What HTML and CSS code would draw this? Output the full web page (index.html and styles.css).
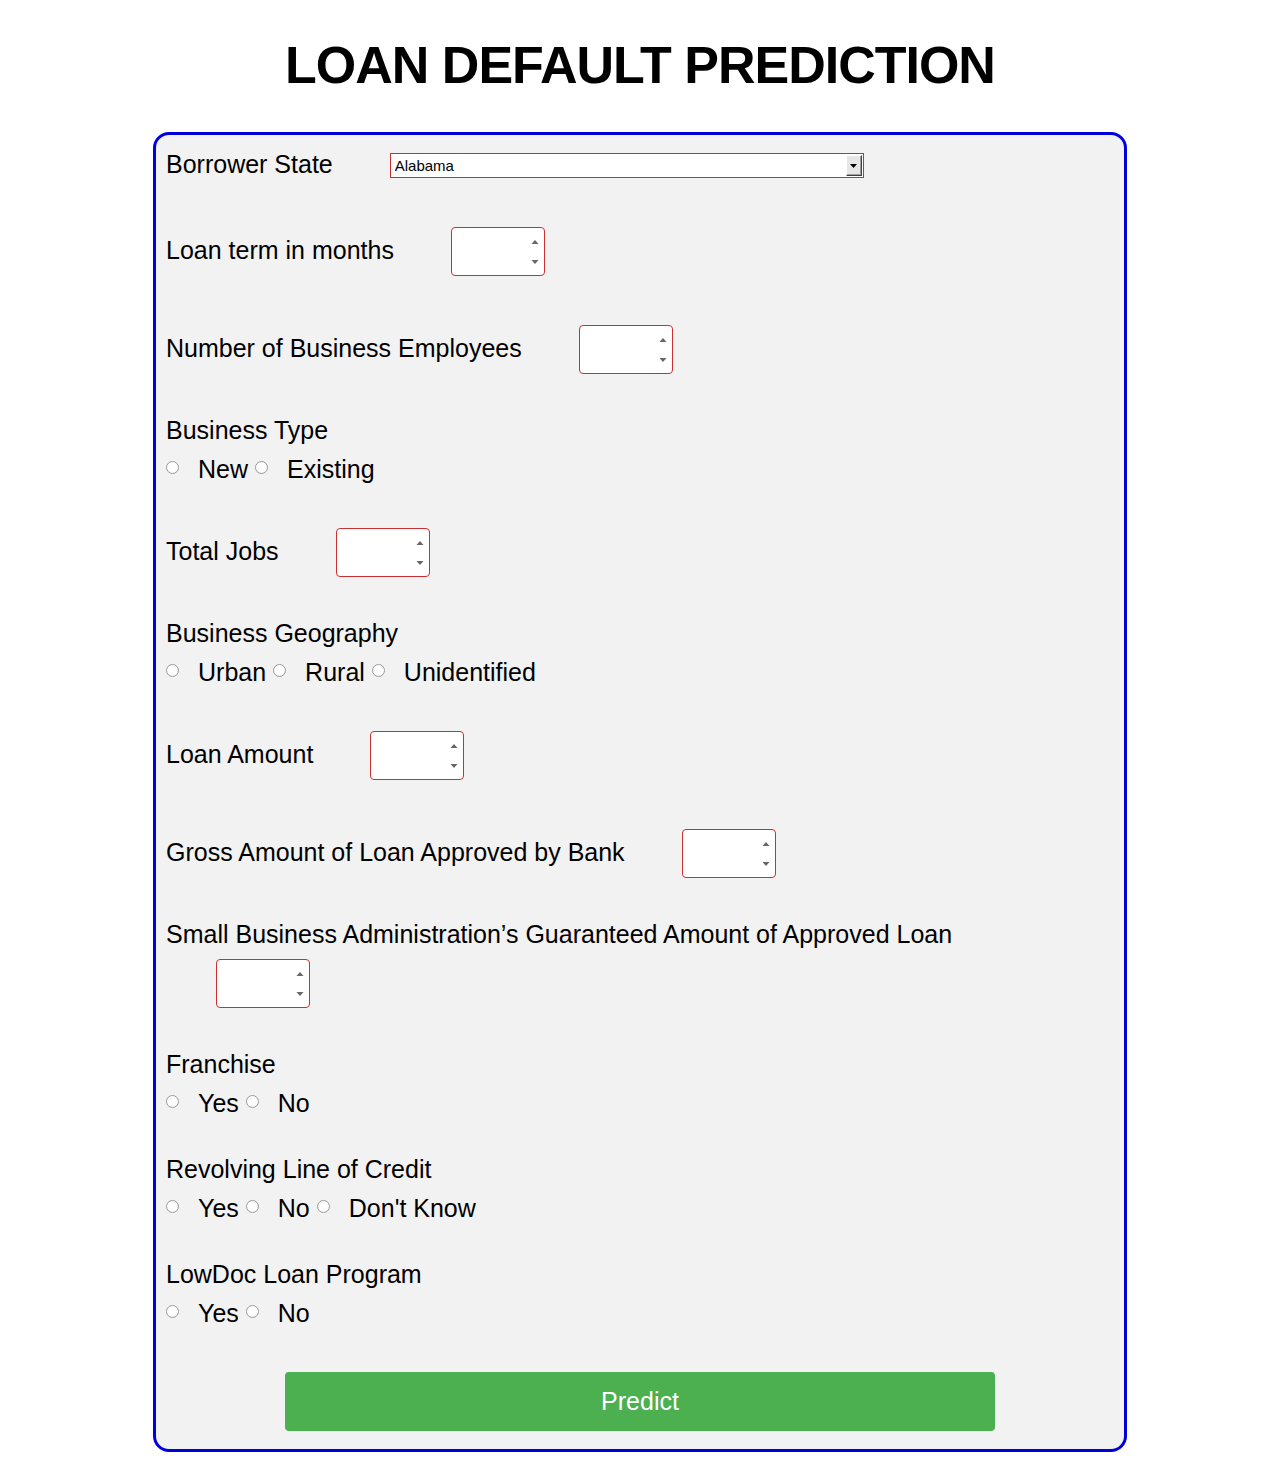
FILE: index.html
```html
<!DOCTYPE html>
<html lang="en">
<head>
<meta charset="utf-8">
<title>Loan Default Prediction</title>
<link rel="stylesheet" href="styles.css">
</head>
<body>
<h1 class="title">LOAN DEFAULT PREDICTION</h1>
<form class="card">
  <div class="field inline">
    <label class="lbl" for="state">Borrower State</label>
    <span class="select-box">
      <select id="state" class="select">
        <option>Alabama</option><option>Alaska</option><option>Arizona</option><option>Arkansas</option><option>California</option>
      </select>
      <span class="select-btn"><svg width="7" height="4" viewBox="0 0 7 4"><polygon points="0,0 7,0 3.5,4" fill="#000"/></svg></span>
    </span>
  </div>

  <div class="field inline">
    <label class="lbl" for="term">Loan term in months</label>
    <span class="num-box"><input id="term" class="num" type="number"><svg class="spin" width="12" height="47" viewBox="0 0 12 47"><polygon points="2.5,16 9.5,16 6,12" fill="#666"/><polygon points="2.5,32 9.5,32 6,36" fill="#666"/></svg></span>
  </div>

  <div class="field inline">
    <label class="lbl" for="emp">Number of Business Employees</label>
    <span class="num-box"><input id="emp" class="num" type="number"><svg class="spin" width="12" height="47" viewBox="0 0 12 47"><polygon points="2.5,16 9.5,16 6,12" fill="#666"/><polygon points="2.5,32 9.5,32 6,36" fill="#666"/></svg></span>
  </div>

  <div class="field">
    <div class="group-lbl">Business Type</div>
    <div class="radios">
      <input type="radio" class="radio" name="btype" id="bt1"><label class="opt" for="bt1">New</label>
      <input type="radio" class="radio" name="btype" id="bt2"><label class="opt" for="bt2">Existing</label>
    </div>
  </div>

  <div class="field inline">
    <label class="lbl" for="jobs">Total Jobs</label>
    <span class="num-box"><input id="jobs" class="num" type="number"><svg class="spin" width="12" height="47" viewBox="0 0 12 47"><polygon points="2.5,16 9.5,16 6,12" fill="#666"/><polygon points="2.5,32 9.5,32 6,36" fill="#666"/></svg></span>
  </div>

  <div class="field">
    <div class="group-lbl">Business Geography</div>
    <div class="radios">
      <input type="radio" class="radio" name="geo" id="g1"><label class="opt" for="g1">Urban</label>
      <input type="radio" class="radio" name="geo" id="g2"><label class="opt" for="g2">Rural</label>
      <input type="radio" class="radio" name="geo" id="g3"><label class="opt" for="g3">Unidentified</label>
    </div>
  </div>

  <div class="field inline">
    <label class="lbl" for="amt">Loan Amount</label>
    <span class="num-box"><input id="amt" class="num" type="number"><svg class="spin" width="12" height="47" viewBox="0 0 12 47"><polygon points="2.5,16 9.5,16 6,12" fill="#666"/><polygon points="2.5,32 9.5,32 6,36" fill="#666"/></svg></span>
  </div>

  <div class="field inline">
    <label class="lbl" for="gross">Gross Amount of Loan Approved by Bank</label>
    <span class="num-box"><input id="gross" class="num" type="number"><svg class="spin" width="12" height="47" viewBox="0 0 12 47"><polygon points="2.5,16 9.5,16 6,12" fill="#666"/><polygon points="2.5,32 9.5,32 6,36" fill="#666"/></svg></span>
  </div>

  <div class="field stacked">
    <label class="group-lbl" for="sba">Small Business Administration’s Guaranteed Amount of Approved Loan</label>
    <span class="num-box indent"><input id="sba" class="num" type="number"><svg class="spin" width="12" height="47" viewBox="0 0 12 47"><polygon points="2.5,16 9.5,16 6,12" fill="#666"/><polygon points="2.5,32 9.5,32 6,36" fill="#666"/></svg></span>
  </div>

  <div class="field">
    <div class="group-lbl">Franchise</div>
    <div class="radios">
      <input type="radio" class="radio" name="fr" id="f1"><label class="opt" for="f1">Yes</label>
      <input type="radio" class="radio" name="fr" id="f2"><label class="opt" for="f2">No</label>
    </div>
  </div>

  <div class="field">
    <div class="group-lbl">Revolving Line of Credit</div>
    <div class="radios">
      <input type="radio" class="radio" name="rev" id="r1"><label class="opt" for="r1">Yes</label>
      <input type="radio" class="radio" name="rev" id="r2"><label class="opt" for="r2">No</label>
      <input type="radio" class="radio" name="rev" id="r3"><label class="opt" for="r3">Don't Know</label>
    </div>
  </div>

  <div class="field">
    <div class="group-lbl">LowDoc Loan Program</div>
    <div class="radios">
      <input type="radio" class="radio" name="ld" id="l1"><label class="opt" for="l1">Yes</label>
      <input type="radio" class="radio" name="ld" id="l2"><label class="opt" for="l2">No</label>
    </div>
  </div>

  <div class="predict-wrap">
    <button type="button" class="predict">Predict</button>
  </div>
</form>
</body>
</html>
```

FILE: styles.css
```css
* { box-sizing: border-box; }

body {
  margin: 0;
  background: #ffffff;
  color: #000;
  font-family: "Liberation Sans", Arial, Helvetica, sans-serif;
}

.title {
  margin: 36px 0 38px;
  font-size: 52px;
  line-height: 58px;
  letter-spacing: -1px;
  font-weight: bold;
  text-align: center;
  color: #000;
}

.card {
  width: 974px;
  margin: 0 auto;
  padding: 11px 10px 18px;
  background: #f2f2f2;
  border: 3px solid #0000dd;
  border-radius: 16px;
}

.field {
  margin-bottom: 38px;
}

.field.inline {
  display: flex;
  align-items: center;
  padding: 7px 0 4px;
}

.field.stacked {
  padding-bottom: 4px;
}

.lbl {
  font-size: 25px;
  line-height: 28px;
  margin-top: -4px;
  white-space: nowrap;
}

.group-lbl {
  display: block;
  font-size: 25px;
  line-height: 28px;
  margin-bottom: 11px;
}

/* select */
.select-box {
  display: inline-flex;
  align-items: center;
  width: 474px;
  height: 25px;
  margin-left: 57px;
  background: #fff;
  border: 1px solid #cc2f2f;
}

.select {
  flex: 1;
  height: 100%;
  border: 0;
  padding: 0 0 0 4px;
  margin: 0;
  background: transparent;
  font-family: "Liberation Sans", Arial, sans-serif;
  font-size: 15px;
  color: #000;
  -webkit-appearance: none;
  appearance: none;
  outline: none;
}

.select-btn {
  display: flex;
  align-items: center;
  justify-content: center;
  width: 16px;
  height: 21px;
  margin-right: 1px;
  background: #e6e6e6;
  border-style: solid;
  border-width: 1px;
  border-color: #ffffff #404040 #404040 #ffffff;
  box-shadow: inset -1px -1px 0 #a0a0a0;
}

/* number inputs */
.num-box {
  display: inline-flex;
  align-items: center;
  width: 94px;
  height: 49px;
  margin-left: 57px;
  background: #fff;
  border: 1px solid #cc2f2f;
  border-radius: 4px;
}

.num-box.indent {
  margin-left: 50px;
}

.num {
  flex: 1;
  min-width: 0;
  height: 100%;
  border: 0;
  padding: 0 4px;
  background: transparent;
  font-size: 13px;
  -moz-appearance: textfield;
  appearance: textfield;
  outline: none;
}

.num::-webkit-inner-spin-button,
.num::-webkit-outer-spin-button {
  -webkit-appearance: none;
  margin: 0;
}

.spin {
  flex: none;
  margin-right: 3px;
}

/* radios */
.radios {
  display: flex;
  align-items: center;
  height: 28px;
}

.radio {
  -webkit-appearance: none;
  appearance: none;
  flex: none;
  width: 13px;
  height: 13px;
  margin: 0 0 4px 0;
  border: 1px solid #9a9a9a;
  border-radius: 50%;
  background: radial-gradient(circle at 50% 40%, #ffffff 55%, #f0f0f0 100%);
}

.opt {
  font-size: 25px;
  line-height: 28px;
  margin: 0 7px 0 19px;
}

/* button */
.predict-wrap {
  display: flex;
  justify-content: center;
  padding-top: 7px;
}

.predict {
  width: 710px;
  height: 59px;
  border: 0;
  border-radius: 4px;
  background: #4caf50;
  color: #fff;
  font-family: "Liberation Sans", Arial, sans-serif;
  font-size: 25px;
  cursor: pointer;
}
```
